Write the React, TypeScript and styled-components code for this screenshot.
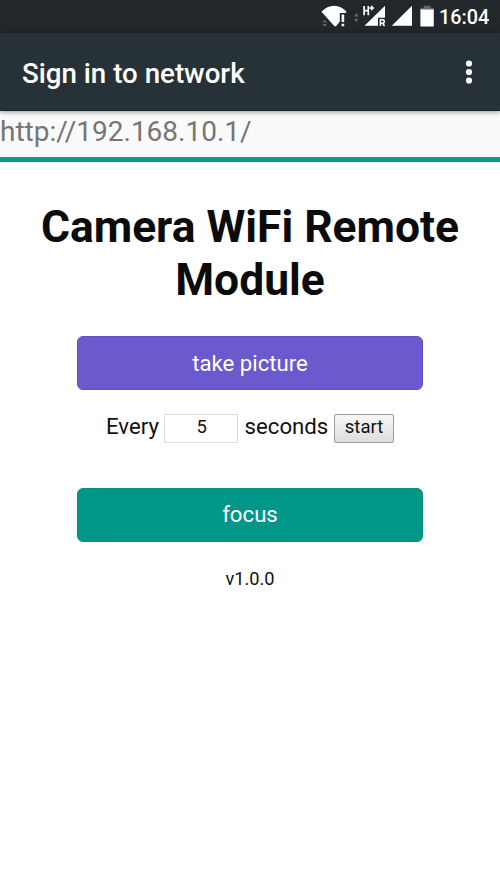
import React from "react";
import styled, { createGlobalStyle } from "styled-components";

const GlobalStyle = createGlobalStyle`
  * { box-sizing: border-box; }
  body { margin: 0; background: #fff; font-family: Roboto, sans-serif; color: #111; }
`;

const Screen = styled.div`
  height: 889px;
  overflow: hidden;
  background: #fff;
`;

const StatusBar = styled.header`
  height: 33px;
  background: #21272b;
  display: flex;
  justify-content: flex-end;
  padding-right: 11px;
`;

const StatusIcons = styled.svg`
  width: 120px;
  height: 33px;
  flex: none;
`;

const Clock = styled.span`
  width: 50px;
  color: #fff;
  font-size: 19.8px;
  font-weight: 500;
  line-height: 35px;
  white-space: nowrap;
`;

const AppBar = styled.div`
  height: 78px;
  position: relative;
  display: flex;
  align-items: center;
  justify-content: space-between;
  padding: 3px 26px 0 22px;
  background: #273238;
  border-bottom: 1px solid #182830;
  box-shadow: 0 1px 5px rgba(0, 0, 0, 0.42);
`;

const AppTitle = styled.div`
  color: #fff;
  font-size: 27.7px;
  font-weight: 500;
  line-height: 36px;
  padding-top: 1px;
  white-space: nowrap;
`;

const MenuIcon = styled.svg`
  width: 10px;
  height: 28px;
  margin-top: -2px;
`;

const UrlBar = styled.div`
  height: 51px;
  background: #fafafa;
  border-bottom: 5px solid #13998a;
  color: #757575;
  font-size: 28px;
  line-height: 42px;
  white-space: nowrap;
`;

const Content = styled.main`
  display: flex;
  flex-direction: column;
  align-items: center;
`;

const Heading = styled.h1`
  margin: 39px 0 0;
  font-size: 44.4px;
  font-weight: 700;
  line-height: 53px;
  text-align: center;
  color: #0b0b0b;
`;

const ActionButton = styled.button<{ $color: string; $edge: string }>`
  width: 346px;
  height: 54px;
  padding: 0;
  border: 1px solid ${(p) => p.$edge};
  border-radius: 6px;
  background: ${(p) => p.$color};
  color: #fff;
  font: 400 22.2px/52px Roboto, sans-serif;
`;

const PictureButton = styled(ActionButton)`
  margin-top: 29px;
`;

const FocusButton = styled(ActionButton)`
  padding-bottom: 1px;
  line-height: 51px;
  margin-top: 45px;
`;

const TimerRow = styled.div`
  display: flex;
  align-items: center;
  width: 288px;
  height: 30px;
  margin-top: 23px;
  font-size: 22.2px;
  line-height: 28px;
  white-space: nowrap;
`;

const EveryLabel = styled.span`
  width: 58px;
  padding-bottom: 4px;
`;

const SecondsLabel = styled.span`
  width: 90px;
  margin-left: 7px;
  padding-bottom: 4px;
`;

const IntervalInput = styled.input`
  width: 74px;
  height: 29px;
  padding: 0 0 2px 2px;
  border: 1px solid #dcdcdc;
  border-radius: 0;
  background: #fff;
  color: #111;
  font: 400 18.5px Roboto, sans-serif;
  text-align: center;
`;

const StartButton = styled.button`
  width: 60px;
  height: 29px;
  flex: none;
  padding: 0 0 2px;
  border: 1px solid #9c9c9c;
  border-radius: 2px;
  background: linear-gradient(#f7f7f7, #dddddd);
  color: #111;
  font: 400 18.5px Roboto, sans-serif;
`;

const Version = styled.div`
  margin-top: 26px;
  font-size: 18.2px;
  line-height: 22px;
`;

const SystemIcons = () => (
  <StatusIcons viewBox="319 0 120 33">
    <path d="M321.500 11.800C325 7.800 329.500 5.700 334 5.700s9.200 2.100 12.600 6.100L345.600 13h-5.800v8.500L336 26.200h-1.500z" fill="#fff" />
    <path d="M341.600 14.500h2.600v7.500h-2.600zM341.600 23.700h2.600v2.600h-2.600z" fill="#fff" />
    <path d="M322.500 22.500l2.200-2.800 2.200 2.800zM322.500 24l2.200 2.800 2.200-2.800zM354 16.500l2.300-3.500 2.300 3.500zM354 18.700l2.300 3.500 2.300-3.500z" fill="#62696d" />
    <path d="M385 5.800v12h-7v8h-13.500z" fill="#fff" />
    <path d="M364.100 6v9.300M368.300 6v9.300M364.100 10.700h4.200M371.800 5.700v4.600M369.500 8h4.600" fill="none" stroke="#fff" strokeWidth="1.700" />
    <path d="M380.400 26v-6.200h2c2.500 0 2.500 3.500 0 3.500h-2m2.100 0 2 2.700" fill="none" stroke="#fff" strokeWidth="1.600" />
    <path d="M412 5.800v20h-20.200z" fill="#fff" />
    <path d="M424 5.800h6.500v2h3.300v2.200h-13.400v-2.200h3.600z" fill="#62696d" />
    <path d="M420.400 9.500h13.400v17h-13.400z" fill="#fff" />
  </StatusIcons>
);

export default function App() {
  return (
    <>
      <GlobalStyle />
      <Screen>
        <StatusBar>
          <SystemIcons />
          <Clock>16:04</Clock>
        </StatusBar>
        <AppBar>
          <AppTitle>Sign in to network</AppTitle>
          <MenuIcon viewBox="0 0 10 28" fill="#fff" aria-label="More options">
            <circle cx="5" cy="5.500" r="3.100" />
            <circle cx="5" cy="14" r="3.100" />
            <circle cx="5" cy="22.500" r="3.100" />
          </MenuIcon>
        </AppBar>
        <UrlBar>http://192.168.10.1/</UrlBar>
        <Content>
          <Heading>
            Camera WiFi Remote
            <br />
            Module
          </Heading>
          <PictureButton $color="#6a5acd" $edge="#5f4fca">take picture</PictureButton>
          <TimerRow>
            <EveryLabel>Every</EveryLabel>
            <IntervalInput defaultValue="5" aria-label="Interval in seconds" />
            <SecondsLabel>seconds</SecondsLabel>
            <StartButton>start</StartButton>
          </TimerRow>
          <FocusButton $color="#009688" $edge="#079082">focus</FocusButton>
          <Version>v1.0.0</Version>
        </Content>
      </Screen>
    </>
  );
}
